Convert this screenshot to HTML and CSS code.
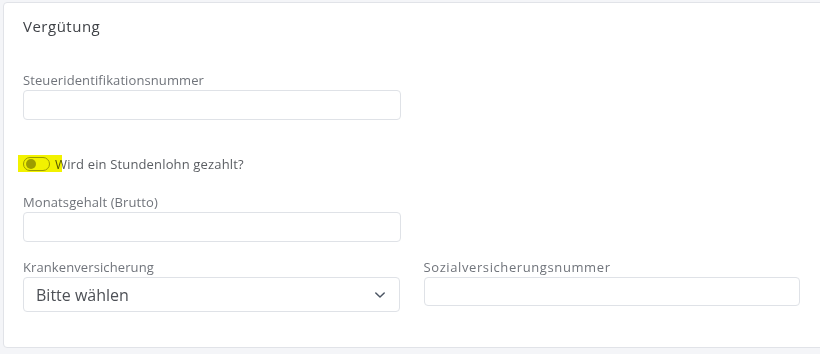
FILE: index.html
```html
<!DOCTYPE html>
<html lang="de">
<head>
<meta charset="utf-8">
<title>Vergütung</title>
<link rel="stylesheet" href="styles.css">
</head>
<body>
<section class="card">
  <h2 class="title">Vergütung</h2>
  <div class="field f1">
    <label class="label">Steueridentifikationsnummer</label>
    <div class="input half"></div>
  </div>
  <div class="toggle-row">
    <span class="toggle"><span class="knob"></span></span>
    <span class="toggle-text">Wird ein Stundenlohn gezahlt?</span>
    <span class="marker"></span>
  </div>
  <div class="field f2">
    <label class="label">Monatsgehalt (Brutto)</label>
    <div class="input half"></div>
  </div>
  <div class="grid">
    <div class="field">
      <label class="label">Krankenversicherung</label>
      <div class="select">
        <span>Bitte wählen</span>
        <svg class="chev" width="12" height="8" viewBox="0 0 12 8"><path d="M1.8 2 L6 6 L10.2 2" fill="none" stroke="#4b5563" stroke-width="1.5" stroke-linecap="round" stroke-linejoin="round"/></svg>
      </div>
    </div>
    <div class="field">
      <label class="label wide">Sozialversicherungsnummer</label>
      <div class="input"></div>
    </div>
  </div>
</section>
</body>
</html>
```
FILE: styles.css
```css
* { box-sizing: border-box; }
html, body { margin: 0; background: #f4f5f8; }
body {
  padding: 2px 0 0 3px;
  font-family: "Open Sans", "Noto Sans", sans-serif;
  color: #6b6f76;
  overflow: hidden;
}
.card {
  width: 822px;
  height: 346px;
  background: #fff;
  border: 1px solid #e1e3e8;
  border-radius: 4px;
  padding: 13px 20px 0 19px;
}
.title {
  margin: 0;
  font-size: 15px;
  line-height: 20px;
  font-weight: 500;
  letter-spacing: 0.5px;
  color: #3f4247;
}
.field { display: flex; flex-direction: column; }
.f1 { margin-top: 36px; }
.label {
  font-size: 13px;
  line-height: 16px;
  letter-spacing: 0.1px;
  color: #70747b;
  margin-bottom: 2px;
  white-space: nowrap;
}
.wide { letter-spacing: 0.6px; }
.input {
  height: 30px;
  border: 1px solid #dfe2e7;
  border-radius: 4px;
  background: #fff;
}
.half { width: 378px; }
.toggle-row {
  position: relative;
  margin-top: 34px;
  height: 20px;
  display: flex;
  align-items: center;
  gap: 5px;
}
.toggle {
  width: 27px;
  height: 14px;
  border: 1px solid #a3a312;
  border-radius: 8px;
  display: flex;
  align-items: center;
  padding-left: 2px;
}
.knob {
  width: 10px; height: 10px; border-radius: 50%;
  background: #a6a600;
}
.toggle-text { font-size: 13px; letter-spacing: 0.15px; color: #5b5e63; }
.marker {
  position: absolute;
  left: -5px; top: 1px;
  width: 44px; height: 17px;
  background: #f2f200;
  mix-blend-mode: multiply;
}
.f2 { margin-top: 20px; }
.grid {
  margin-top: 17px;
  display: grid;
  grid-template-columns: 1fr 1fr;
  column-gap: 24px;
  width: 777px;
  align-items: start;
}
.select {
  height: 35px;
  border: 1px solid #dfe2e7;
  border-radius: 4px;
  display: flex;
  align-items: center;
  justify-content: space-between;
  padding: 0 13px 0 12px;
  font-size: 16px;
  color: #4d5056;
}
.grid .input { height: 29px; }
```
